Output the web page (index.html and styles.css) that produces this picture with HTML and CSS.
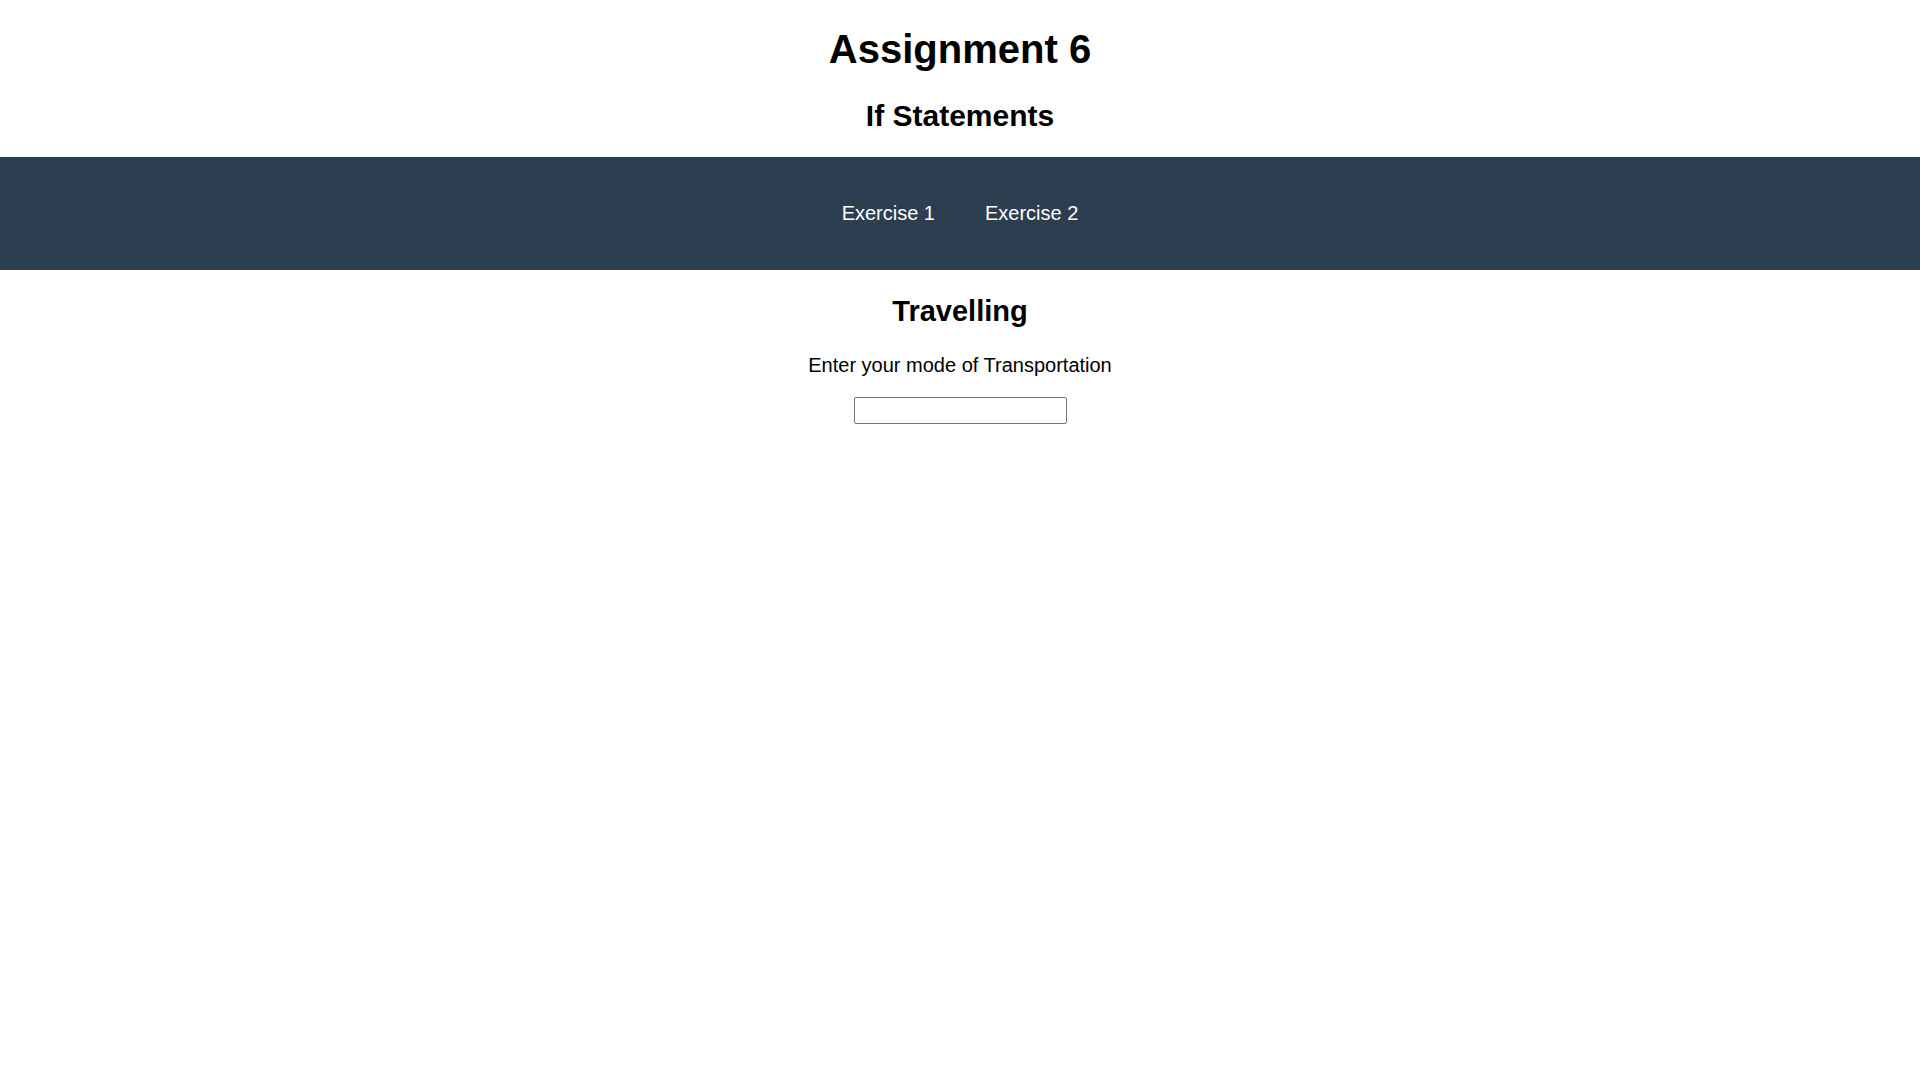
FILE: index.html
```html
<!DOCTYPE html>
<html lang="en">
<head>
<meta charset="utf-8">
<title>Assignment 6</title>
<link rel="stylesheet" href="styles.css">
</head>
<body>
<header class="page-header">
  <h1 class="title">Assignment 6</h1>
  <h2 class="subtitle">If Statements</h2>
</header>
<nav class="nav">
  <a class="nav-link" href="#">Exercise 1</a>
  <a class="nav-link" href="#">Exercise 2</a>
</nav>
<main class="content">
  <h2 class="section-title">Travelling</h2>
  <p class="prompt">Enter your mode of Transportation</p>
  <input class="text-input" type="text">
</main>
</body>
</html>
```
FILE: styles.css
```css
html, body {
  margin: 0;
  padding: 0;
  background: #ffffff;
}
body {
  font-family: "Liberation Sans", Arial, sans-serif;
  color: #000000;
}
.page-header {
  text-align: center;
  padding-top: 26px;
}
.title {
  font-size: 40px;
  font-weight: bold;
  line-height: 46px;
  margin: 0 0 27px 0;
}
.subtitle {
  font-size: 30px;
  font-weight: bold;
  line-height: 34px;
  margin: 0 0 24px 0;
}
.nav {
  background: #2c3e50;
  height: 113px;
  display: flex;
  justify-content: center;
  align-items: center;
  gap: 50px;
}
.nav-link {
  color: #ffffff;
  text-decoration: none;
  font-size: 20px;
  line-height: 23px;
  padding-top: 0;
}
.content {
  display: flex;
  flex-direction: column;
  align-items: center;
  padding-top: 24px;
}
.section-title {
  font-size: 29px;
  font-weight: bold;
  line-height: 34px;
  margin: 0 0 26px 0;
}
.prompt {
  font-size: 20px;
  line-height: 23px;
  margin: 0 0 20px 0;
}
.text-input {
  width: 213px;
  height: 27px;
  box-sizing: border-box;
  border: 1px solid #767676;
  border-radius: 2px;
  padding: 1px 2px;
  margin: 0;
  font-family: "Liberation Sans", Arial, sans-serif;
  font-size: 16px;
  background: #ffffff;
}
```
